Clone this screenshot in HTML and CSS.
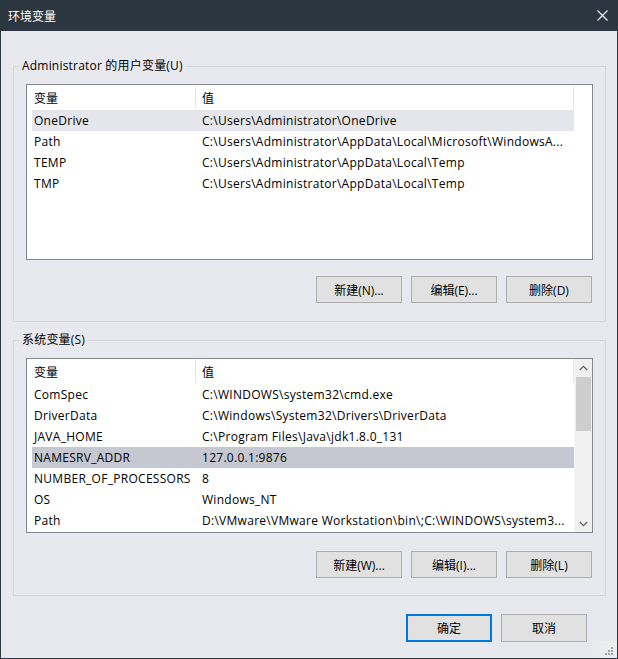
FILE: index.html
```html
<!DOCTYPE html>
<html lang="zh-CN">
<head>
<meta charset="utf-8">
<title>环境变量</title>
<link rel="stylesheet" href="styles.css">
</head>
<body>
<div class="window">
  <div class="titlebar">
    <span class="title">环境变量</span>
    <svg class="close" width="11" height="11" viewBox="0 0 11 11"><path d="M0.5 0.5 L10.5 10.5 M10.5 0.5 L0.5 10.5" stroke="#ffffff" stroke-width="1.1" fill="none"/></svg>
  </div>
  <div class="content">
    <div class="group">
      <span class="legend">Administrator 的用户变量(U)</span>
      <div class="lv lv-user">
        <div class="lv-body">
          <div class="lv-head"><div class="h1">变量</div><div class="h2">值</div></div>
          <div class="row sel-light"><div class="c1">OneDrive</div><div class="c2">C:\Users\Administrator\OneDrive</div></div>
          <div class="row"><div class="c1">Path</div><div class="c2">C:\Users\Administrator\AppData\Local\Microsoft\WindowsA...</div></div>
          <div class="row"><div class="c1">TEMP</div><div class="c2">C:\Users\Administrator\AppData\Local\Temp</div></div>
          <div class="row"><div class="c1">TMP</div><div class="c2">C:\Users\Administrator\AppData\Local\Temp</div></div>
        </div>
      </div>
      <div class="btnrow">
        <button class="btn">新建(N)...</button>
        <button class="btn">编辑(E)...</button>
        <button class="btn">删除(D)</button>
      </div>
    </div>
    <div class="group group2">
      <span class="legend">系统变量(S)</span>
      <div class="lv lv-sys">
        <div class="lv-body">
          <div class="lv-head"><div class="h1">变量</div><div class="h2">值</div></div>
          <div class="row"><div class="c1">ComSpec</div><div class="c2">C:\WINDOWS\system32\cmd.exe</div></div>
          <div class="row"><div class="c1">DriverData</div><div class="c2">C:\Windows\System32\Drivers\DriverData</div></div>
          <div class="row"><div class="c1">JAVA_HOME</div><div class="c2">C:\Program Files\Java\jdk1.8.0_131</div></div>
          <div class="row sel-dark"><div class="c1">NAMESRV_ADDR</div><div class="c2">127.0.0.1:9876</div></div>
          <div class="row"><div class="c1">NUMBER_OF_PROCESSORS</div><div class="c2">8</div></div>
          <div class="row"><div class="c1">OS</div><div class="c2">Windows_NT</div></div>
          <div class="row"><div class="c1">Path</div><div class="c2">D:\VMware\VMware Workstation\bin\;C:\WINDOWS\system3...</div></div>
        </div>
        <div class="scrollbar">
          <div class="sb-arrow"><svg width="9" height="6" viewBox="0 0 9 6"><path d="M0.8 5 L4.5 1.3 L8.2 5" stroke="#606060" stroke-width="1.2" fill="none"/></svg></div>
          <div class="sb-track"><div class="sb-thumb"></div></div>
          <div class="sb-arrow"><svg width="9" height="6" viewBox="0 0 9 6"><path d="M0.8 1 L4.5 4.7 L8.2 1" stroke="#606060" stroke-width="1.2" fill="none"/></svg></div>
        </div>
      </div>
      <div class="btnrow">
        <button class="btn">新建(W)...</button>
        <button class="btn">编辑(I)...</button>
        <button class="btn">删除(L)</button>
      </div>
    </div>
    <div class="footer">
      <button class="btn btn-default">确定</button>
      <button class="btn">取消</button>
    </div>
  </div>
  <svg class="grip" width="18" height="17" viewBox="0 0 18 17">
    <rect x="0" y="0" width="18" height="17" fill="#ededf0"/>
    <rect x="12" y="6" width="2" height="2" fill="#a3a3a8"/>
    <rect x="9" y="9" width="2" height="2" fill="#a3a3a8"/>
    <rect x="12" y="9" width="2" height="2" fill="#a3a3a8"/>
    <rect x="6" y="12" width="2" height="2" fill="#a3a3a8"/>
    <rect x="9" y="12" width="2" height="2" fill="#a3a3a8"/>
    <rect x="12" y="12" width="2" height="2" fill="#a3a3a8"/>
  </svg>
</div>
</body>
</html>
```
FILE: styles.css
```css
* { box-sizing: border-box; }
html, body { margin: 0; padding: 0; }
body {
  font-family: "Open Sans", "Noto Sans CJK SC", sans-serif;
  font-size: 12px;
  color: #000;
  background: #e8e9ee;
}
.window {
  position: relative;
  width: 618px;
  height: 659px;
  background: #e8e9ee;
  border: 1px solid #2f3a45;
  border-top: none;
  display: flex;
  flex-direction: column;
}
.titlebar {
  height: 31px;
  margin: 0 -1px;
  background: #2c3640;
  color: #fff;
  display: flex;
  align-items: center;
  justify-content: space-between;
  padding: 0 10px 1px 8px;
}
.title { font-family: "Noto Sans CJK SC", sans-serif; font-size: 12px; }
.close { display: block; }
.content {
  padding: 0 11px 0 12px;
  display: flex;
  flex-direction: column;
}
.group {
  margin-top: 35px;
  border: 1px solid #d5d6db;
  height: 256px;
  display: flex;
  flex-direction: column;
}
.group2 { margin-top: 18px; }
.legend {
  align-self: flex-start;
  margin: -10px 0 0 6px;
  padding: 0 2px;
  line-height: 17px;
  height: 17px;
  background: #e8e9ee;
  white-space: nowrap;
  letter-spacing: 0.2px;
}
.lv {
  margin: 10px 0 0 12px;
  width: 567px;
  height: 176px;
  border: 1px solid #828790;
  background: #fff;
  display: flex;
  overflow: hidden;
}
.lv-sys { height: 175px; }
.lv-body {
  width: 547px;
  display: flex;
  flex-direction: column;
}
.lv-head {
  display: flex;
  height: 25px;
  align-items: stretch;
}
.h1, .h2 {
  display: flex;
  align-items: center;
  border-right: 1px solid #e5e5e5;
  margin: 1px 0 1px;
}
.h1 { width: 169px; padding-left: 7px; }
.h2 { flex: 1; padding-left: 6px; }
.row {
  display: flex;
  align-items: center;
  height: 21px;
  margin-left: 5px;
  width: 542px;
  white-space: nowrap;
  letter-spacing: 0.28px;
}
.c1 { width: 170px; padding-left: 2px; overflow: hidden; }
.c2 { flex: 1; overflow: hidden; }
.sel-light { background: #e5e6eb; }
.sel-dark { background: #c5c8d0; }
.scrollbar {
  width: 18px;
  background: #f0f0f0;
  display: flex;
  flex-direction: column;
  border-left: 1px solid #f7f7f7;
}
.sb-arrow {
  height: 17px;
  display: flex;
  align-items: center;
  justify-content: center;
}
.sb-track { flex: 1; padding: 1px 1px 0 1px; }
.sb-thumb { height: 54px; background: #cdcdcd; }
.btnrow {
  display: flex;
  justify-content: flex-end;
  gap: 9px;
  margin-top: 16px;
  padding-right: 13px;
}
.group2 .btnrow { margin-top: 18px; }
.btn {
  width: 86px;
  height: 27px;
  border: 1px solid #adadad;
  background: #e1e1e1;
  font-family: "Open Sans", "Noto Sans CJK SC", sans-serif;
  font-size: 12px;
  color: #000;
  padding: 0;
  margin: 0;
}
.footer {
  display: flex;
  justify-content: flex-end;
  gap: 9px;
  margin-top: 18px;
  padding-right: 19px;
}
.footer .btn { height: 28px; }
.btn-default { border: 2px solid #0078d7; }
.grip {
  position: absolute;
  right: 0;
  bottom: 0;
  display: block;
}
```
